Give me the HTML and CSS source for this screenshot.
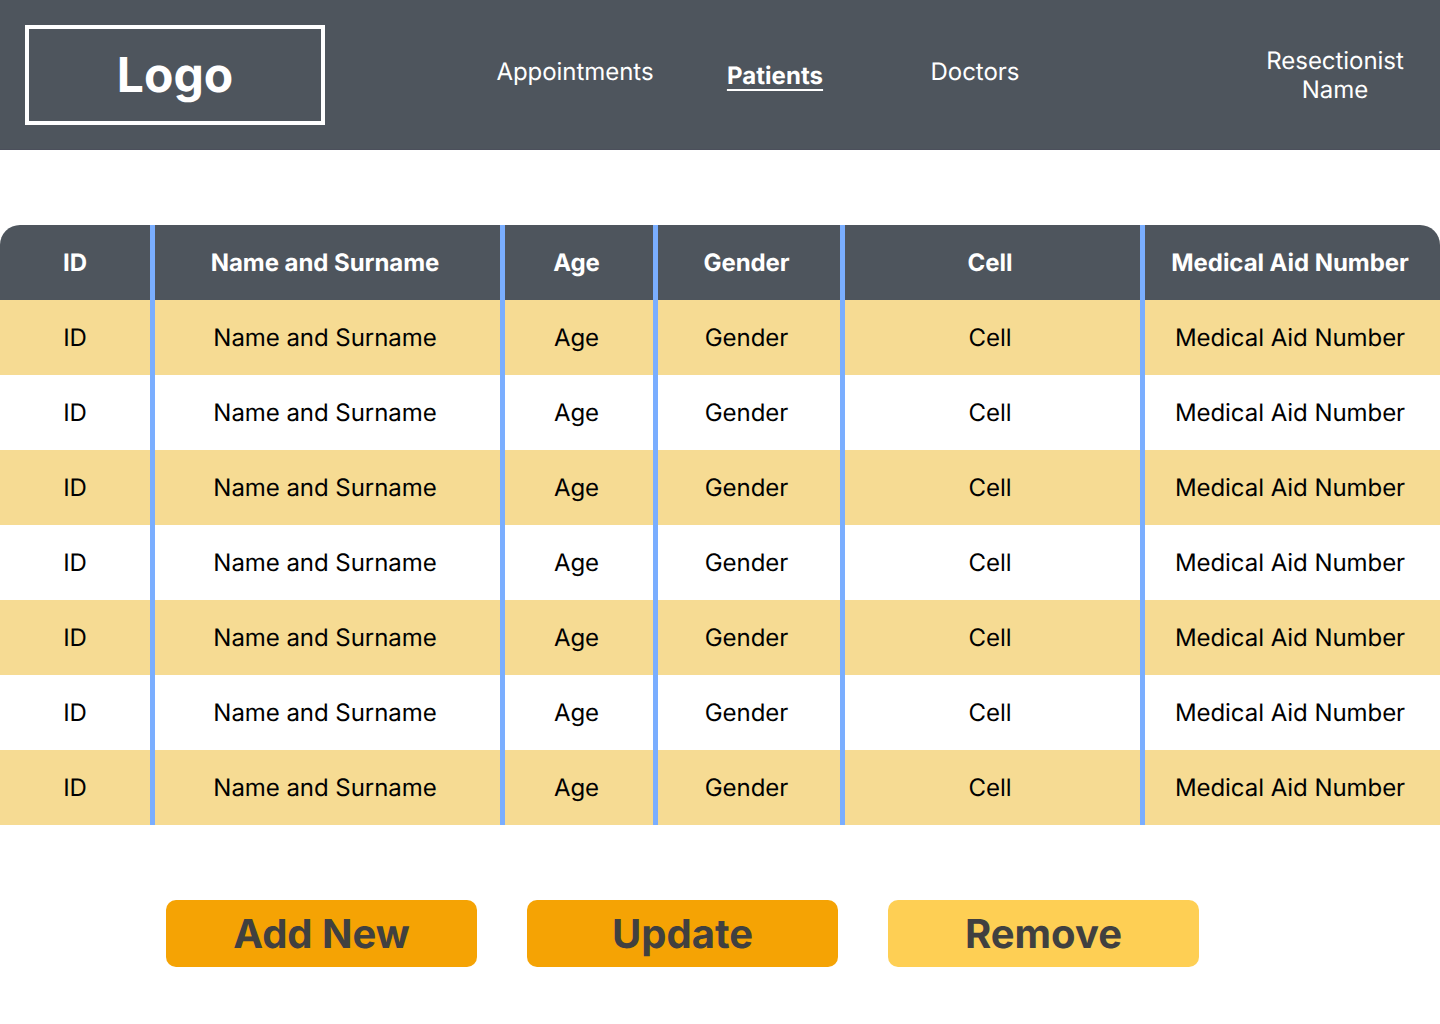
FILE: index.html
```html
<!DOCTYPE html>
<html lang="en">
<head>
<meta charset="utf-8">
<title>Patients</title>
<link rel="stylesheet" href="styles.css">
</head>
<body>
<header class="topbar">
  <div class="logo">Logo</div>
  <nav class="nav">
    <a class="nav-link">Appointments</a>
    <a class="nav-link active">Patients</a>
    <a class="nav-link">Doctors</a>
  </nav>
  <div class="user">Resectionist<br>Name</div>
</header>
<main>
  <div class="table">
    <div class="row head"><span>ID</span><span>Name and Surname</span><span>Age</span><span>Gender</span><span>Cell</span><span>Medical Aid Number</span></div>
    <div class="row"><span>ID</span><span>Name and Surname</span><span>Age</span><span>Gender</span><span>Cell</span><span>Medical Aid Number</span></div>
    <div class="row"><span>ID</span><span>Name and Surname</span><span>Age</span><span>Gender</span><span>Cell</span><span>Medical Aid Number</span></div>
    <div class="row"><span>ID</span><span>Name and Surname</span><span>Age</span><span>Gender</span><span>Cell</span><span>Medical Aid Number</span></div>
    <div class="row"><span>ID</span><span>Name and Surname</span><span>Age</span><span>Gender</span><span>Cell</span><span>Medical Aid Number</span></div>
    <div class="row"><span>ID</span><span>Name and Surname</span><span>Age</span><span>Gender</span><span>Cell</span><span>Medical Aid Number</span></div>
    <div class="row"><span>ID</span><span>Name and Surname</span><span>Age</span><span>Gender</span><span>Cell</span><span>Medical Aid Number</span></div>
    <div class="row"><span>ID</span><span>Name and Surname</span><span>Age</span><span>Gender</span><span>Cell</span><span>Medical Aid Number</span></div>
  </div>
  <div class="actions">
    <button class="btn">Add New</button>
    <button class="btn">Update</button>
    <button class="btn light">Remove</button>
  </div>
</main>
</body>
</html>
```
FILE: styles.css
```css
* { box-sizing: border-box; }
body { margin: 0; background: #fff; font-family: Inter, sans-serif; font-size: 24px; line-height: 29px; color: #000; text-rendering: geometricPrecision; }
.topbar { display: flex; align-items: center; height: 150px; padding: 0 25px; background: #4e555d; box-shadow: inset 0 -1px #4b4f5b; color: #fff; }
.logo { display: flex; align-items: center; justify-content: center; width: 300px; height: 100px; border: 4px solid #fff; font-size: 48px; line-height: 58px; font-weight: 700; }
.nav { display: flex; align-items: center; margin-left: 150px; }
.nav-link { width: 200px; text-align: center; font-weight: 400; letter-spacing: -0.05px; margin-top: -7px; }
.nav-link.active { font-weight: 700; letter-spacing: 0.05px; text-decoration: underline; text-decoration-thickness: 2px; text-underline-offset: 5px; margin-top: 1px; }
.user { width: 160px; margin-left: auto; text-align: center; font-weight: 400; letter-spacing: -0.05px; }
.table { margin-top: 75px; border-radius: 20px 20px 0 0; overflow: hidden; }
.row { display: grid; grid-template-columns: 150px 350px 153px 187px 300px 300px; height: 75px; }
.row span { display: flex; align-items: center; justify-content: center; white-space: nowrap; letter-spacing: -0.05px; }
.row span + span { border-left: 5px solid #7aaeff; padding-right: 5px; }
.row:nth-child(even) { background: #f6db93; }
.row.head { background: #4e555d; color: #fff; font-weight: 700; }
.actions { display: flex; gap: 50px; margin: 75px 0 0 166px; }
.btn { width: 311px; height: 67px; padding: 0; border: 0; border-radius: 10px; background: #f5a304; color: #404040; font: 700 40px/48px Inter, sans-serif; text-rendering: inherit; }
.btn.light { background: #fecf54; }
```
